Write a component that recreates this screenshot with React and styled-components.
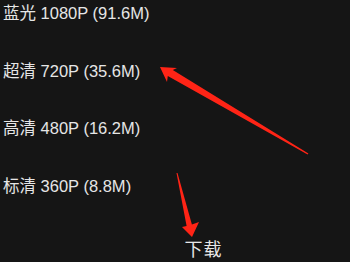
import React from "react";
import styled, { createGlobalStyle } from "styled-components";

const GlobalStyle = createGlobalStyle`
  html, body {
    margin: 0;
    padding: 0;
    background: #151515;
  }
  body {
    font-family: "Liberation Sans", "Noto Sans CJK SC", sans-serif;
  }
`;

const qualities = [
  { label: "蓝光", res: "1080P", size: "91.6M" },
  { label: "超清", res: "720P", size: "35.6M" },
  { label: "高清", res: "480P", size: "16.2M" },
  { label: "标清", res: "360P", size: "8.8M" },
];

// 画面上的红色标注箭头
const arrows = [
  "M160 67 L177 68 L172.8 70.1 L308.4 153.4 L307.6 154.6 L167.8 76.1 L167 82 Z",
  "M192 237 L182 227 L186.6 225.9 L176.5 173.1 L177.5 172.9 L191.9 224.6 L199 222 Z",
];

const App = () => {
  return (
    <Page>
      <GlobalStyle />
      <QualityList>
        {qualities.map((q) => (
          <QualityRow key={q.res}>
            {q.label} {q.res} ({q.size})
          </QualityRow>
        ))}
      </QualityList>
      <Footer>
        <DownloadButton>下载</DownloadButton>
      </Footer>
      <Annotation viewBox="0 0 350 262">
        {arrows.map((d, i) => (
          <path key={i} d={d} fill="#ff2416" />
        ))}
      </Annotation>
    </Page>
  );
};

const Page = styled.div`
  position: relative;
  width: 350px;
  height: 262px;
  overflow: hidden;
  background: #151515;
  display: flex;
  flex-direction: column;
`;

const QualityList = styled.div`
  display: flex;
  flex-direction: column;
  gap: 31.5px;
  padding-left: 3px;
`;

const QualityRow = styled.div`
  height: 26px;
  line-height: 26px;
  font-size: 16.5px;
  color: #e6e6e6;
  white-space: nowrap;
`;

const Footer = styled.div`
  display: flex;
  justify-content: center;
  padding-left: 57px;
  margin-top: 39px;
`;

const DownloadButton = styled.div`
  font-size: 18px;
  line-height: 24px;
  color: #e8e8e8;
  letter-spacing: 1px;
`;

const Annotation = styled.svg`
  position: absolute;
  left: 0;
  top: 0;
  width: 350px;
  height: 262px;
  pointer-events: none;
`;

export default App;
